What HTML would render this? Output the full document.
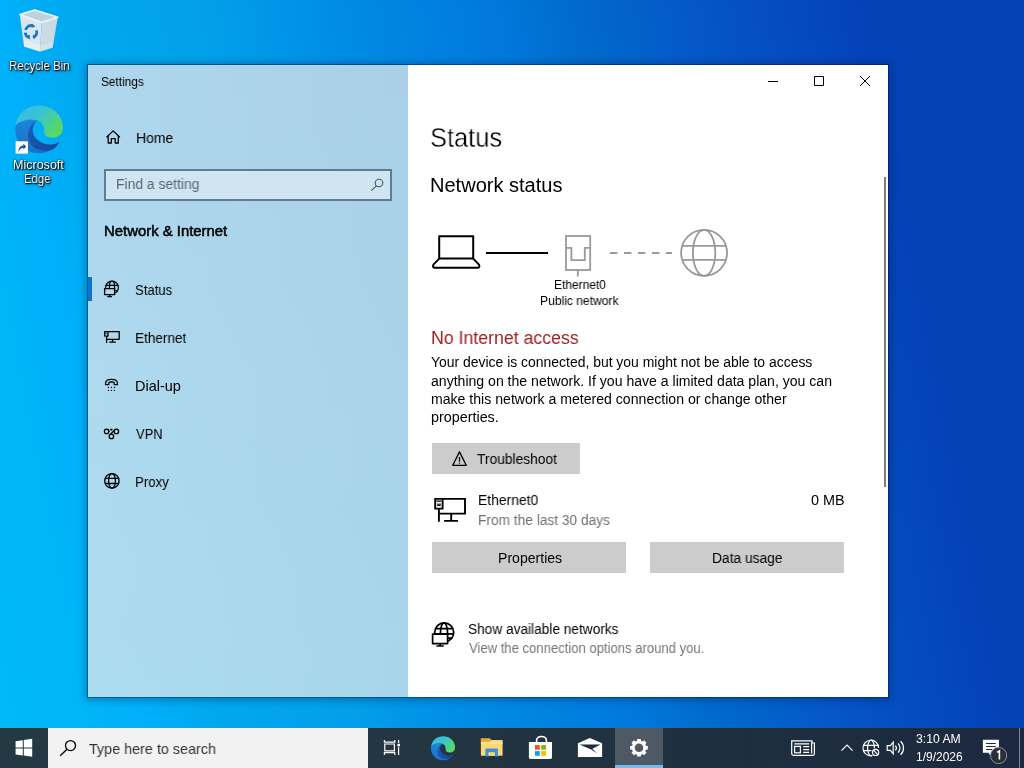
<!DOCTYPE html>
<html><head><meta charset="utf-8"><style>
html,body{margin:0;padding:0;width:1024px;height:768px;overflow:hidden;position:relative;font-family:"Liberation Sans",sans-serif;}
.t{position:absolute;white-space:nowrap;transform-origin:0 0;will-change:transform;}
.a{position:absolute;}
#bg{position:absolute;left:0;top:0;width:1024px;height:768px;
 background:linear-gradient(79deg,#00b8fa 0%,#00b5f8 8%,#00b0fa 13%,#00a8ee 19%,#02a0ea 30%,#008ee6 40%,#0078dc 55%,#006ccc 61%,#0556c8 72%,#0442b8 86%,#0440b6 100%);}
#win{position:absolute;left:87px;top:64px;width:800px;height:632px;border:1px solid rgba(0,16,40,.5);box-shadow:0 1px 8px 1px rgba(0,15,60,.33);}
#left{position:absolute;left:0;top:0;width:320px;height:632px;background:linear-gradient(90deg,rgba(0,20,60,0) 0%,rgba(0,20,60,.03) 100%),linear-gradient(180deg,#aed6ec 0%,#aed9ee 50%,#acdcf0 100%);}
#right{position:absolute;left:320px;top:0;width:480px;height:632px;background:#fff;}
#tb{position:absolute;left:0;top:728px;width:1024px;height:40px;background:linear-gradient(90deg,#233a44 0%,#233641 40%,#1f2f3f 68%,#1c2940 100%);}
#ov{position:absolute;left:0;top:0;}

</style></head><body>
<div id="bg"></div>
<div id="win">
 <div id="left"></div>
 <div id="right"></div>
</div>
<!-- search box -->
<div class="a" style="left:104px;top:169px;width:284px;height:28px;border:2px solid #5f7d92;background:#cfe6f2;"></div>
<!-- selection bar -->
<div class="a" style="left:88px;top:277px;width:4px;height:24px;background:#0a76d2;"></div>
<!-- buttons -->
<div class="a" style="left:432px;top:443px;width:148px;height:31px;background:#cccccc;"></div>
<div class="a" style="left:432px;top:542px;width:194px;height:31px;background:#cccccc;"></div>
<div class="a" style="left:650px;top:542px;width:194px;height:31px;background:#cccccc;"></div>
<!-- scrollbar -->
<div class="a" style="left:884px;top:177px;width:2px;height:310px;background:#7c7c7c;"></div>
<!-- taskbar -->
<div id="tb"></div>
<div class="a" style="left:0;top:728px;width:48px;height:40px;background:#233a44;"></div>
<div class="a" style="left:48px;top:728px;width:320px;height:40px;background:#f2f2f2;"></div>
<div class="a" style="left:615px;top:728px;width:48px;height:40px;background:#4d5965;"></div>
<div class="a" style="left:615px;top:765px;width:48px;height:3px;background:#76b9ed;"></div>
<div class="a" style="left:1019px;top:728px;width:1px;height:40px;background:#7a8290;"></div>


<svg class="a" style="left:0;top:0" width="1024" height="768" viewBox="0 0 1024 768">
 <defs>
  <linearGradient id="eTop" x1="0" y1="0" x2="1" y2="0.6">
   <stop offset="0" stop-color="#38b9ee"/><stop offset="0.5" stop-color="#38c4d2"/><stop offset="1" stop-color="#5ad862"/>
  </linearGradient>
  <linearGradient id="eLeft" x1="0" y1="0" x2="0" y2="1">
   <stop offset="0" stop-color="#1c86da"/><stop offset="1" stop-color="#1a70c8"/>
  </linearGradient>
  <linearGradient id="eDark" x1="0" y1="0" x2="1" y2="1">
   <stop offset="0" stop-color="#1b5db5"/><stop offset="1" stop-color="#12479a"/>
  </linearGradient>
  <symbol id="edge" viewBox="0 0 48 48">
   <path d="M0.3 20.5 C5 15 15 13 22 15 C18.5 18.5 17 23 18 28 C19.5 34 26 38.5 33 39.3 C37 39.6 41 38.8 44.3 36.4 A23.8 23.8 0 0 1 0.3 20.5 Z" fill="url(#eLeft)"/>
   <path d="M22 15 C14 20 11 28 14 36 C17 43 25 46 33 45.5 C39 45 42 41 44.3 36.4 C41 38.8 37 39.6 33 39.3 C26 38.5 19.5 34 18 28 C17 23 18.5 18.5 22 15 Z" fill="url(#eDark)"/>
   <path d="M0.3 20.5 C2 8 12 0.3 24 0.3 C37 0.3 47.8 10 47.8 22 C47.8 29 43 32.5 37.5 32.5 C32 32.5 28.6 30 29 26 C29.5 21 27 16.5 22 15 C15 13 5 15 0.3 20.5 Z" fill="url(#eTop)"/>
  </symbol>
 </defs>
 <!-- desktop edge -->
 <use href="#edge" x="15" y="105.3" width="48.2" height="48"/>
 <rect x="15.6" y="141.3" width="12.4" height="12.3" fill="#fff"/>
 <path d="M18.4 152 C18.4 148 20.2 145.6 23.4 145.4 V143.8 L26.2 146.6 L23.4 149.4 V147.8 C21 147.9 19.6 149.4 18.4 152 Z" fill="#1b4f9c"/>
 <!-- recycle bin -->
 <path d="M19.8 14.6 L41.7 22.4 L40.1 51.5 L24 46.4 Z" fill="#dae6ee"/>
 <path d="M41.7 22.4 L57.8 17.2 L52.6 47.4 L40.1 51.5 Z" fill="#ccdae4"/>
 <path d="M24 40 L40.5 45.5 L40.1 51.5 L24 46.4 Z" fill="#e6eef3"/>
 <path d="M40.5 45.5 L53.4 41.6 L52.6 47.4 L40.1 51.5 Z" fill="#d4e1ea"/>
 <path d="M19.8 14.6 L34.9 9.9 L57.8 17.2 L41.7 22.4 Z" fill="#bcd2e1" stroke="#eef6fb" stroke-width="1.6" stroke-linejoin="round"/>
 <g fill="none" stroke="#1f74c8" stroke-width="2.8">
  <path d="M25.6 30 A5.8 5.8 0 0 1 32.6 25.6"/>
  <path d="M36.4 30.4 A5.8 5.8 0 0 1 33 37.6"/>
  <path d="M29 37.4 A5.8 5.8 0 0 1 25.2 32.6"/>
 </g>
 <g fill="#1f74c8">
  <path d="M32 23.4 L35.4 26.4 L31.4 28 Z"/>
  <path d="M37.8 34.4 L34.4 38.8 L32.6 35 Z"/>
  <path d="M25.6 36.2 L29.8 39.4 L30 35 Z"/>
 </g>
 <!-- taskbar edge -->
 <use href="#edge" x="431" y="736" width="24.2" height="24.4"/>
 <!-- explorer -->
 <path d="M480.9 738.4 H489.6 L491.6 740 H502.6 V755.8 H480.9 Z" fill="#f8d775"/>
 <path d="M480.9 738.4 H489.6 L491.6 740.2 L489.8 741.8 H480.9 Z" fill="#e3a932"/>
 <path d="M480.9 741.8 H502.6 V744 H480.9 Z" fill="#fce49a" opacity=".8"/>
 <path d="M485.4 748.4 H497.9 V756.4 H494.8 V752.4 H488.6 V756.4 H485.4 Z" fill="#3d8fd9"/>
 <rect x="488.6" y="752.4" width="6.2" height="3.4" fill="#f8d775"/>
 <!-- store -->
 <path d="M536.6 742.4 V739.8 A5 4.2 0 0 1 546.4 739.8 V742.4" fill="none" stroke="#fff" stroke-width="1.6"/>
 <path d="M528.9 742 H552 V757.6 Q552 759 550.6 759 H530.3 Q528.9 759 528.9 757.6 Z" fill="#fff"/>
 <rect x="535" y="745.1" width="4.8" height="4.6" fill="#f25022"/>
 <rect x="541.2" y="745.1" width="4.8" height="4.6" fill="#7fba00"/>
 <rect x="535" y="751.1" width="4.8" height="4.7" fill="#00a4ef"/>
 <rect x="541.2" y="751.1" width="4.8" height="4.7" fill="#ffb900"/>
 <!-- mail -->
 <path d="M577.9 743.3 L589.8 737.9 L602.1 743.3 V757 H577.9 Z" fill="#fff"/>
 <path d="M579.5 744.4 H600.6 L592.4 748.8 L597 753.6 L591.2 749.6 Z" fill="#1d2d3d"/>
 <!-- gear -->
 <g transform="translate(639 747.8)">
  <path fill="#fff" d="M6.59 -2.04 L8.82 -1.79 L8.82 1.79 L6.59 2.04 L6.10 3.22 L7.50 4.97 L4.97 7.50 L3.22 6.10 L2.04 6.59 L1.79 8.82 L-1.79 8.82 L-2.04 6.59 L-3.22 6.10 L-4.97 7.50 L-7.50 4.97 L-6.10 3.22 L-6.59 2.04 L-8.82 1.79 L-8.82 -1.79 L-6.59 -2.04 L-6.10 -3.22 L-7.50 -4.97 L-4.97 -7.50 L-3.22 -6.10 L-2.04 -6.59 L-1.79 -8.82 L1.79 -8.82 L2.04 -6.59 L3.22 -6.10 L4.97 -7.50 L7.50 -4.97 L6.10 -3.22 Z"/>
  <circle r="7.1" fill="#fff"/>
  <circle r="4.3" fill="#4d5965"/>
 </g>
 <!-- tray -->
 <g fill="none" stroke="#fff" stroke-width="1.2">
  <path d="M812 742.8 V740.8 H791.7 V753.6 Q791.7 755.4 793.5 755.4 H812.8 Q814.4 755.4 814.4 753.6 V743 H811.6 V753.4"/>
  <path d="M794.4 743.8 H809.2 M803.2 746.6 H809.2 M803.2 749.6 H809.2 M803.2 752.4 H809.2"/>
  <rect x="794.6" y="746.4" width="5.8" height="6.4"/>
  <path d="M841.4 750.6 L847 745 L852.6 750.6"/>
  <path d="M878.6 748 A7.8 7.8 0 1 0 871.4 755.8"/>
  <ellipse cx="871" cy="748" rx="3.4" ry="7.8"/>
  <path d="M863.4 745.4 H878.6 M863.4 750.6 H871.5"/>
  <circle cx="875.6" cy="752.4" r="4.3" fill="#1d2b3f" stroke="none"/>
  <circle cx="875.6" cy="752.4" r="3.1"/>
  <path d="M873.4 750.2 L877.8 754.6"/>
  <path d="M887.2 745.6 H890.4 L893.2 742.2 V753.8 L890.4 750.4 H887.2 Z"/>
  <path d="M895.4 745.6 A3.6 3.6 0 0 1 895.4 750.4 M898 743.4 A6.4 6.4 0 0 1 898 752.6 M900.6 741.2 A9.4 9.4 0 0 1 900.6 754.8"/>
 </g>
 <path d="M982.9 739.8 H998.9 V752.8 H993 L990.2 755.4 L988.4 752.8 H982.9 Z" fill="#fff"/>
 <path d="M986 743.5 H995.8 M986 746.5 H995.8 M986 749.5 H992" stroke="#1c2a3c" stroke-width="1.1"/>
 <circle cx="998.6" cy="755.5" r="8.1" fill="#2a2e36" stroke="#8c929c" stroke-width="1"/>
 <path d="M997 752.4 L999.4 751 V759.4" fill="none" stroke="#fff" stroke-width="1.6"/>
</svg>

<svg id="ov" width="1024" height="768" viewBox="0 0 1024 768">
 <g fill="none" stroke="#000" stroke-width="1.3" stroke-linejoin="round">
  <!-- home -->
  <path d="M106.5 137.2 L113.2 130.9 L119.9 137.2 M108.2 135.8 V143 H111.3 V138.6 H115.2 V143 H118.3 V135.8"/>
  <!-- status icon: globe + monitor -->
  <circle cx="112" cy="287.6" r="6.4"/>
  <ellipse cx="112" cy="287.6" rx="2.6" ry="6.4"/>
  <path d="M106 285.3 H118 M106 290.7 H118"/>
  <rect x="104.6" y="288.6" width="10" height="6" fill="#b0dbef"/>
  <path d="M109.6 294.6 V296.6 M107.2 296.6 H112"/>
  <!-- ethernet nav -->
  <path d="M106.6 342.9 V336.1 H104.7 V331.6 H119.2 V339.3 H106.6 M108 331.6 V336.1 H106.6 M112.5 339.3 V342.1 M109.2 342.1 H115.8"/>
  <path d="M105.4 333.2 H107.3" stroke-width="0.8"/>
  <!-- dial-up -->
  <path d="M105.6 384.6 C105 380 108 379.4 111.5 379.4 C115 379.4 118 380 117.4 384.6 H114.2 V382.6 C114 381.8 109 381.8 108.8 382.6 V384.6 Z"/>
  <!-- vpn -->
  <circle cx="106.6" cy="431.4" r="2.2"/>
  <circle cx="116.4" cy="431.4" r="2.2"/>
  <circle cx="111.4" cy="436.4" r="2.2"/>
  <path d="M108.8 431.4 H109.6 M110 434.6 L114.5 430.2 M110.4 429 L111.4 430 L112.4 429"/>
  <!-- proxy -->
  <circle cx="111.9" cy="480.9" r="7.2"/>
  <ellipse cx="112" cy="480.9" rx="3.4" ry="7.2"/>
  <path d="M105 478.3 H119 M105 483.5 H119"/>
  <!-- find search -->
  <circle cx="379" cy="183" r="3.8" stroke="#3d5566" stroke-width="1.1"/>
  <path d="M376.3 185.8 L371.4 190.6" stroke="#3d5566" stroke-width="1.1"/>
  <!-- title bar buttons -->
  <path d="M768 81.5 H778" stroke-width="1"/>
  <rect x="814.5" y="76.5" width="9" height="9" stroke-width="1"/>
  <path d="M860 76 L870 86 M870 76 L860 86" stroke-width="1"/>
  <!-- laptop -->
  <rect x="439.2" y="236.2" width="34" height="22.4" stroke-width="2"/>
  <path d="M439.2 258.6 L433.4 264.6 Q432.2 267.8 435 267.8 H477.4 Q480.2 267.8 479 264.6 L473.2 258.6" stroke-width="2"/>
  <path d="M486 253 H548" stroke-width="2"/>
  <!-- ethernet port -->
  <g stroke="#9a9a9a" stroke-width="1.8" stroke-linejoin="miter">
   <rect x="566" y="236" width="24.2" height="34"/>
   <path d="M566 247.9 H571.4 V260.2 H584.8 V247.9 H590.2 M577.8 270 V276.4"/>
   <path d="M610 253 H672" stroke-dasharray="7.4 6.6"/>
  </g>
  <!-- globe gray -->
  <g stroke="#999" stroke-width="1.8">
   <circle cx="704.1" cy="252.8" r="23"/>
   <ellipse cx="704.1" cy="252.8" rx="11.2" ry="23"/>
   <path d="M682 245.8 H726 M682 259.8 H726"/>
  </g>
  <!-- warning -->
  <path d="M459.5 451.9 L466.3 465.4 H452.7 Z" stroke-width="1.25"/>
  <path d="M459.5 457.1 V461.7 M459.5 462.7 V463.7" stroke-width="1.3"/>
  <!-- ethernet monitor -->
  <g stroke-width="1.9" stroke-linejoin="miter">
   <path d="M438.9 521.8 V508.6 H435.2 V498.9 H465 V513.6 H438.9 M442.6 498.9 V508.6 H438.9 M451.2 513.6 V520.9 M444.1 520.9 H458"/>
   <path d="M436.4 501.2 H441.4 M437.9 503.6 V505.4 H440 V503.6" stroke-width="1.3"/>
  </g>
  <!-- show networks globe+monitor -->
  <g stroke-width="1.7">
   <circle cx="444.2" cy="632.4" r="9.5"/>
   <ellipse cx="444" cy="632.4" rx="3.5" ry="9.5"/>
   <path d="M435.6 628.6 H452.8 M435 633.9 H453.6 M446 638.2 H452.4"/>
   <rect x="432.6" y="634.2" width="15" height="9.4" fill="#fff"/>
   <path d="M440.1 643.6 V646 M436.4 646 H443.8"/>
  </g>
 </g>
 <!-- dial-up dots -->
 <g fill="#000">
  <circle cx="108.4" cy="387.4" r=".7"/><circle cx="111.4" cy="387.4" r=".7"/><circle cx="114.4" cy="387.4" r=".7"/>
  <circle cx="108.4" cy="390.4" r=".7"/><circle cx="111.4" cy="390.4" r=".7"/><circle cx="114.4" cy="390.4" r=".7"/>
 </g>
 <!-- taskbar icons -->
 <g fill="#fff">
  <!-- windows logo -->
  <path d="M15.6 741.2 L22.8 740.2 V747.4 H15.6 Z M23.8 740 L32.2 738.8 V747.4 H23.8 Z M15.6 748.4 H22.8 V755.4 L15.6 754.4 Z M23.8 748.4 H32.2 V756.8 L23.8 755.6 Z"/>
 </g>
 <g fill="none" stroke="#000" stroke-width="1.3">
  <circle cx="70.5" cy="745.6" r="5"/>
  <path d="M67 749.2 L60.2 755.8"/>
 </g>
 <g fill="none" stroke="#fff" stroke-width="1.2">
  <!-- task view -->
  <path d="M384.4 740 V742.2 H394.8 V740 M384.4 755 V752.6 H394.8 V755 M384.8 744 H394.4 V750.8 H384.8 Z M398.6 740 V743 M398.6 747.2 V755"/>
 </g>
 <rect x="397.4" y="743.8" width="2.6" height="2.6" fill="#fff"/>
</svg>

<div class="t" style="left:101.45px;top:69.77px;font-size:12.5px;line-height:25.0px;font-weight:400;color:#000;transform:scaleX(0.9455);">Settings</div>
<div class="t" style="left:136.04px;top:124.28px;font-size:14.5px;line-height:29.0px;font-weight:400;color:#000;transform:scaleX(0.9649);">Home</div>
<div class="t" style="left:115.81px;top:170.35px;font-size:14px;line-height:28px;font-weight:400;color:#5c6670;transform:scaleX(0.9927);">Find a setting</div>
<div class="t" style="left:103.75px;top:217.48px;font-size:14.2px;line-height:28.4px;font-weight:400;color:#000;transform:scaleX(1.0491);-webkit-text-stroke:0.5px #000;">Network &amp; Internet</div>
<div class="t" style="left:134.90px;top:275.98px;font-size:14.5px;line-height:29.0px;font-weight:400;color:#000;transform:scaleX(0.9050);">Status</div>
<div class="t" style="left:134.76px;top:323.88px;font-size:14.5px;line-height:29.0px;font-weight:400;color:#000;transform:scaleX(0.9352);">Ethernet</div>
<div class="t" style="left:134.71px;top:371.88px;font-size:14.5px;line-height:29.0px;font-weight:400;color:#000;transform:scaleX(0.9909);">Dial-up</div>
<div class="t" style="left:136.30px;top:419.88px;font-size:14.5px;line-height:29.0px;font-weight:400;color:#000;transform:scaleX(0.8931);">VPN</div>
<div class="t" style="left:134.79px;top:468.18px;font-size:14.5px;line-height:29.0px;font-weight:400;color:#000;transform:scaleX(0.9139);">Proxy</div>
<div class="t" style="left:430.21px;top:108.76px;font-size:28.4px;line-height:56.8px;font-weight:400;color:#000;transform:scaleX(0.8961);-webkit-text-stroke:0.4px #fff;">Status</div>
<div class="t" style="left:429.90px;top:165.07px;font-size:20px;line-height:40px;font-weight:400;color:#000;transform:scaleX(1.0015);">Network status</div>
<div class="t" style="left:553.82px;top:272.77px;font-size:12.2px;line-height:24.4px;font-weight:400;color:#000;transform:scaleX(0.9824);">Ethernet0</div>
<div class="t" style="left:539.71px;top:289.27px;font-size:12.2px;line-height:24.4px;font-weight:400;color:#000;transform:scaleX(0.9910);">Public network</div>
<div class="t" style="left:431.33px;top:319.76px;font-size:18px;line-height:36px;font-weight:400;color:#9e1b1b;transform:scaleX(0.9844);">No Internet access</div>
<div class="t" style="left:431.49px;top:349.12px;font-size:13.8px;line-height:27.6px;font-weight:400;color:#000;transform:scaleX(1.0098);">Your device is connected, but you might not be able to access</div>
<div class="t" style="left:431.48px;top:367.52px;font-size:13.8px;line-height:27.6px;font-weight:400;color:#000;transform:scaleX(1.0191);">anything on the network. If you have a limited data plan, you can</div>
<div class="t" style="left:431.48px;top:385.92px;font-size:13.8px;line-height:27.6px;font-weight:400;color:#000;transform:scaleX(1.0213);">make this network a metered connection or change other</div>
<div class="t" style="left:431.46px;top:404.32px;font-size:13.8px;line-height:27.6px;font-weight:400;color:#000;transform:scaleX(1.0397);">properties.</div>
<div class="t" style="left:477.30px;top:444.95px;font-size:14px;line-height:28px;font-weight:400;color:#000;transform:scaleX(0.9840);">Troubleshoot</div>
<div class="t" style="left:478.01px;top:486.25px;font-size:14px;line-height:28px;font-weight:400;color:#000;transform:scaleX(0.9915);">Ethernet0</div>
<div class="t" style="left:478.02px;top:506.35px;font-size:14px;line-height:28px;font-weight:400;color:#707070;transform:scaleX(0.9805);">From the last 30 days</div>
<div class="t" style="left:810.87px;top:485.65px;font-size:14px;line-height:28px;font-weight:400;color:#000;transform:scaleX(1.0290);">0 MB</div>
<div class="t" style="left:497.90px;top:543.95px;font-size:14px;line-height:28px;font-weight:400;color:#000;transform:scaleX(1.0048);">Properties</div>
<div class="t" style="left:711.61px;top:543.95px;font-size:14px;line-height:28px;font-weight:400;color:#000;transform:scaleX(0.9857);">Data usage</div>
<div class="t" style="left:468.02px;top:615.05px;font-size:14px;line-height:28px;font-weight:400;color:#000;transform:scaleX(0.9765);">Show available networks</div>
<div class="t" style="left:469.00px;top:633.95px;font-size:14px;line-height:28px;font-weight:400;color:#767676;transform:scaleX(0.9339);">View the connection options around you.</div>
<div class="t" style="left:8.98px;top:53.77px;font-size:12.5px;line-height:25.0px;font-weight:400;color:#fff;transform:scaleX(0.9195);text-shadow:1px 1px 1px #000,0 0 2px rgba(0,0,0,.9),1px 1px 3px rgba(0,0,0,.7);">Recycle Bin</div>
<div class="t" style="left:12.70px;top:153.27px;font-size:12.5px;line-height:25.0px;font-weight:400;color:#fff;transform:scaleX(1.0020);text-shadow:1px 1px 1px #000,0 0 2px rgba(0,0,0,.9),1px 1px 3px rgba(0,0,0,.7);">Microsoft</div>
<div class="t" style="left:24.49px;top:166.97px;font-size:12.5px;line-height:25.0px;font-weight:400;color:#fff;transform:scaleX(0.9071);text-shadow:1px 1px 1px #000,0 0 2px rgba(0,0,0,.9),1px 1px 3px rgba(0,0,0,.7);">Edge</div>
<div class="t" style="left:89.00px;top:734.30px;font-size:15px;line-height:30px;font-weight:400;color:#333;transform:scaleX(0.9576);">Type here to search</div>
<div class="t" style="left:915.88px;top:727.34px;font-size:12px;line-height:24px;font-weight:400;color:#fff;transform:scaleX(1.0167);">3:10 AM</div>
<div class="t" style="left:915.90px;top:745.44px;font-size:12px;line-height:24px;font-weight:400;color:#fff;transform:scaleX(0.9978);">1/9/2026</div>
</body></html>
